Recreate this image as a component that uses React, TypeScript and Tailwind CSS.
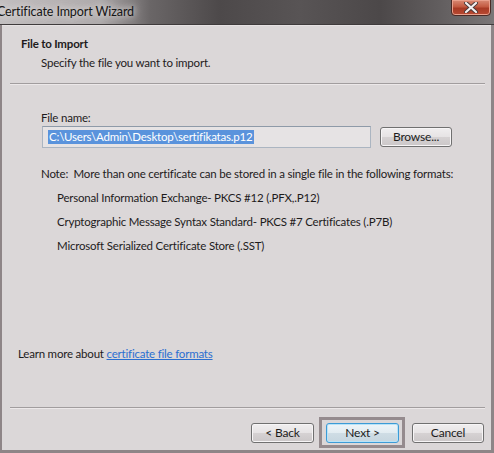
const font = { fontFamily: 'Lato, "Open Sans", sans-serif' };

function WinButton({ label, width, focused }: { label: string; width: string; focused?: boolean }) {
  return (
    <button
      className={`${width} h-[20px] rounded-[3px] border text-[12px] leading-[18px] text-[#1c1c1c] ${
        focused
          ? 'border-[#3c9bd6] bg-[linear-gradient(#eef5f9,#e2ecf1_50%,#cfdde5_50%,#c6d6df)] shadow-[inset_0_0_0_1px_#b9e3f7]'
          : 'border-[#707070] bg-[linear-gradient(#f0eeef,#e6e3e4_50%,#d6d2d3_50%,#cbc7c8)] shadow-[inset_0_0_0_1px_#f7f5f6]'
      }`}
    >
      {label}
    </button>
  );
}

export default function App() {
  return (
    <div className="w-[494px] h-[453px] flex flex-col overflow-hidden bg-[#8e8587] text-[11.5px] tracking-[-0.2px] text-[#1e1b1c]" style={font}>
      {/* Title bar */}
      <div className="relative h-[25px] shrink-0 border-b border-[#3f3b3c] bg-[linear-gradient(to_right,#c2bebf_0px,#aeaaab_100px,#6a6667_150px,#4d494a_220px,#585455_300px,#4c4849_380px,#625e5f_440px,#7a7677_494px)]">
        <span className="absolute left-[-3px] top-[3px] whitespace-nowrap text-[12.5px] tracking-[-0.1px] leading-[17px] text-[#151515] [text-shadow:0_0_6px_#e4e0e1,0_0_10px_#d8d4d5]">
          Certificate Import Wizard
        </span>
        <div className="absolute left-[451px] top-[-1px] w-[40px] h-[17px] rounded-bl-[4px] rounded-br-[4px] border border-[#4a2a25] bg-[linear-gradient(#d98a74,#c35a41_45%,#a83a24_55%,#b84a33)] flex items-center justify-center shadow-[inset_0_0_0_1px_#e9a08c]">
          <svg width="14" height="11" viewBox="0 0 14 11">
            <path d="M2 1 L12 10 M12 1 L2 10" stroke="#4a3a3a" strokeWidth="4" strokeLinecap="round" />
            <path d="M2 1 L12 10 M12 1 L2 10" stroke="#f4f0f0" strokeWidth="2.2" strokeLinecap="round" />
          </svg>
        </div>
      </div>

      {/* Client area */}
      <div className="flex-1 ml-[2px] mr-[3px] mb-[3px] bg-[#dbd7d8] flex flex-col border-t border-[#e6e2e3] whitespace-nowrap">
        <div className="pl-[19px] pt-[10px] leading-[16px] font-bold">File to Import</div>
        <div className="pl-[39px] mt-[3px] leading-[16px]">Specify the file you want to import.</div>
        <div className="ml-[8px] mr-[6px] mt-[12px] h-px bg-[#a19d9e] shadow-[0_1px_0_#ece8e9]" />

        <div className="pl-[39px] mt-[26px] leading-[16px]">File name:</div>
        <div className="pl-[40px] mt-[0px] flex items-center gap-[9px]">
          <div className="w-[329px] h-[22px] border border-[#abb5c1] border-t-[#8e9aa8] bg-[#e6e3e4] flex items-center pl-[5px]">
            <span className="bg-[#5a93dc] text-white leading-[14px] px-px">C:\Users\Admin\Desktop\sertifikatas.p12</span>
          </div>
          <WinButton label="Browse..." width="w-[72px]" />
        </div>

        <div className="pl-[39px] mt-[18px] leading-[16px]">Note:&nbsp; More than one certificate can be stored in a single file in the following formats:</div>
        <div className="pl-[55px] mt-[8px] flex flex-col gap-[8px] leading-[16px]">
          <div>Personal Information Exchange- PKCS #12 (.PFX,.P12)</div>
          <div>Cryptographic Message Syntax Standard- PKCS #7 Certificates (.P7B)</div>
          <div>Microsoft Serialized Certificate Store (.SST)</div>
        </div>

        <div className="pl-[16px] mt-[92px] leading-[16px]">
          Learn more about <span className="text-[#2b6fd0] underline">certificate file formats</span>
        </div>

        <div className="flex-1" />
        <div className="ml-[8px] mr-[6px] h-px bg-[#a19d9e] shadow-[0_1px_0_#ece8e9]" />
        <div className="mt-[9px] mb-[2px] pr-[7px] flex items-center justify-end">
          <WinButton label="< Back" width="w-[63px]" />
          <div className="ml-[5px] mr-[7px] border-[3px] border-[#958b8e] pl-[4px] pr-[3px] pt-[3px] pb-[2px]">
            <WinButton label="Next >" width="w-[73px]" focused />
          </div>
          <WinButton label="Cancel" width="w-[72px]" />
        </div>
      </div>
    </div>
  );
}
